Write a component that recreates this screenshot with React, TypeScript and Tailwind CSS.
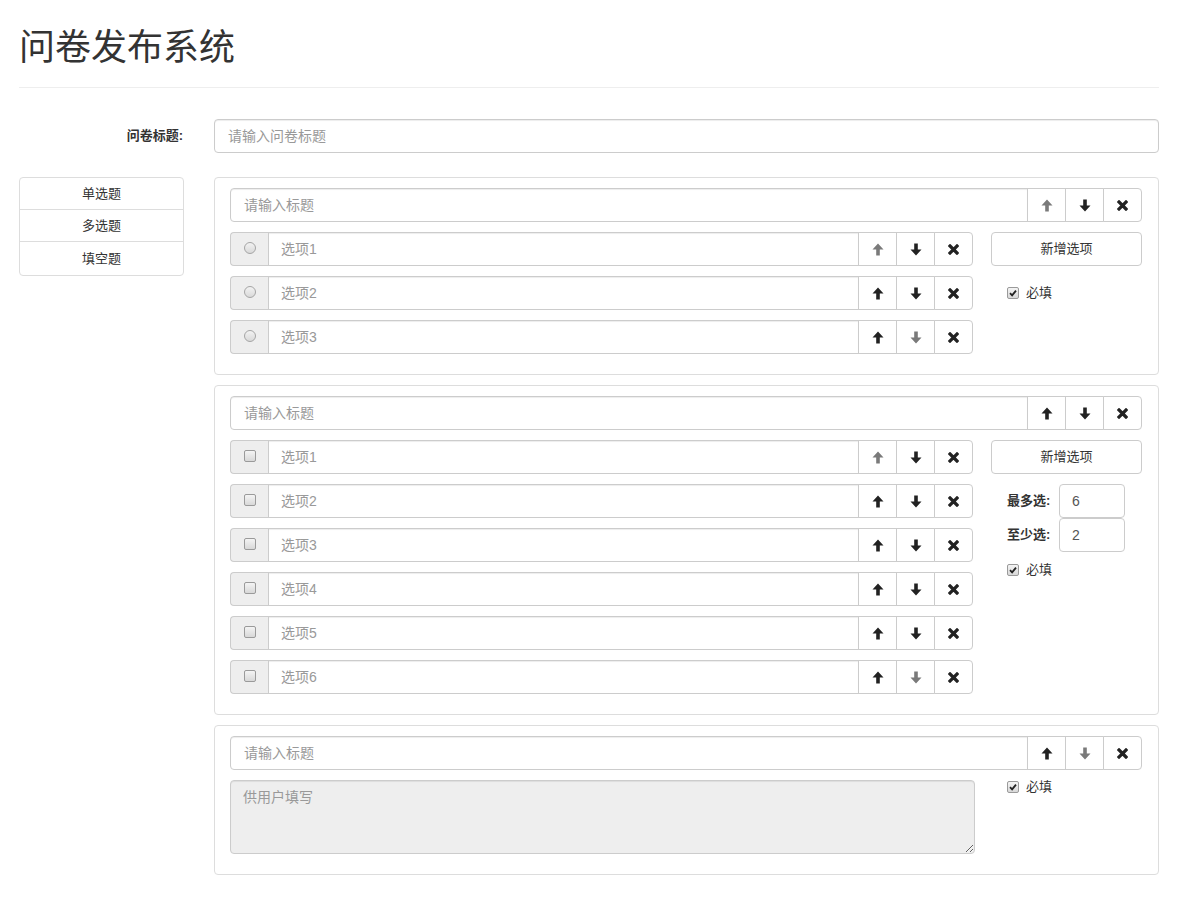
import React from "react";

type Dir = "up" | "down";

function ArrowIcon({ dir, muted }: { dir: Dir; muted?: boolean }) {
  return (
    <svg
      width="12"
      height="13"
      viewBox="0 0 12 13"
      className={muted ? "text-[#7a7a7a]" : "text-[#222]"}
      style={{ transform: dir === "down" ? "rotate(180deg)" : undefined }}
    >
      <polygon fill="currentColor" points="6,0.5 11.5,6.5 7.8,6.5 7.8,12.5 4.2,12.5 4.2,6.5 0.5,6.5" />
    </svg>
  );
}

function RemoveIcon() {
  return (
    <svg width="11" height="11" viewBox="0 0 11 11" className="text-[#222]">
      <path d="M2 2 L9 9 M9 2 L2 9" stroke="currentColor" strokeWidth="3.2" strokeLinecap="square" />
    </svg>
  );
}

function ToolButtons({ upOff, downOff }: { upOff?: boolean; downOff?: boolean }) {
  return (
    <div className="flex">
      <button type="button" className="w-[39px] h-[34px] -ml-px border border-[#ccc] bg-white flex items-center justify-center">
        <ArrowIcon dir="up" muted={upOff} />
      </button>
      <button type="button" className="w-[39px] h-[34px] -ml-px border border-[#ccc] bg-white flex items-center justify-center">
        <ArrowIcon dir="down" muted={downOff} />
      </button>
      <button type="button" className="w-[39px] h-[34px] -ml-px border border-[#ccc] bg-white rounded-r flex items-center justify-center">
        <RemoveIcon />
      </button>
    </div>
  );
}

function FakeCheck({ checked }: { checked?: boolean }) {
  return (
    <span className="w-[12px] h-[12px] rounded-[2px] border border-[#9a9a9a] bg-gradient-to-b from-[#f4f4f4] to-[#d8d8d8] flex items-center justify-center">
      {checked && (
        <svg width="8" height="8" viewBox="0 0 8 8">
          <path d="M1 4.2 L3.1 6.3 L7 1.6" fill="none" stroke="#222" strokeWidth="1.8" />
        </svg>
      )}
    </span>
  );
}

function FakeRadio() {
  return <span className="w-[12px] h-[12px] rounded-full border border-[#a5a5a5] bg-gradient-to-b from-[#f2f2f2] to-[#d9d9d9]" />;
}

function TitleRow({ upOff, downOff }: { upOff?: boolean; downOff?: boolean }) {
  return (
    <div className="flex h-[34px]">
      <input
        className="flex-1 min-w-0 border border-[#ccc] rounded-l px-[13px] text-[14px] text-[#555] placeholder:text-[#999] outline-none shadow-[inset_0_1px_1px_rgba(0,0,0,0.075)]"
        placeholder="请输入标题"
      />
      <ToolButtons upOff={upOff} downOff={downOff} />
    </div>
  );
}

function OptionRow({ label, kind, upOff, downOff }: { label: string; kind: "radio" | "check"; upOff?: boolean; downOff?: boolean }) {
  return (
    <div className="flex h-[34px]">
      <div className="w-[38px] border border-[#ccc] border-r-0 rounded-l bg-[#eee] flex items-center justify-center pb-[2px]">
        {kind === "radio" ? <FakeRadio /> : <FakeCheck />}
      </div>
      <input
        className="flex-1 min-w-0 border border-[#ccc] px-[12px] text-[14px] text-[#555] placeholder:text-[#999] outline-none shadow-[inset_0_1px_1px_rgba(0,0,0,0.075)]"
        placeholder={label}
      />
      <ToolButtons upOff={upOff} downOff={downOff} />
    </div>
  );
}

function Required() {
  return (
    <div className="flex items-center gap-[7px] pl-[16px] h-[20px] text-[13px] text-[#333]">
      <FakeCheck checked />
      <span>必填</span>
    </div>
  );
}

function AddButton() {
  return (
    <button type="button" className="w-full h-[34px] border border-[#ccc] rounded bg-white text-[13px] text-[#333]">
      新增选项
    </button>
  );
}

export default function App() {
  const multi = ["选项1", "选项2", "选项3", "选项4", "选项5", "选项6"];

  return (
    <div className="min-h-screen bg-white text-[#333] font-['Liberation_Sans','Noto_Sans_CJK_SC',sans-serif] px-[19px] w-[1178px]">
      {/* header */}
      <div className="pt-[28px] pb-[19px] border-b border-[#eee]">
        <h1 className="text-[36px] leading-[40px] font-normal text-[#333]">问卷发布系统</h1>
      </div>

      {/* survey title */}
      <div className="flex items-center mt-[31px]">
        <label className="w-[165px] pr-px text-right text-[13px] font-bold">问卷标题:</label>
        <input
          className="ml-[30px] flex-1 h-[34px] border border-[#ccc] rounded px-[13px] text-[14px] placeholder:text-[#999] outline-none shadow-[inset_0_1px_1px_rgba(0,0,0,0.075)]"
          placeholder="请输入问卷标题"
        />
      </div>

      <div className="flex items-start mt-[24px] gap-[30px]">
        {/* type list */}
        <div className="w-[165px] border border-[#ddd] rounded text-[13px] text-[#333]">
          <div className="h-[32px] flex items-center justify-center border-b border-[#ddd]">单选题</div>
          <div className="h-[32px] flex items-center justify-center border-b border-[#ddd]">多选题</div>
          <div className="h-[33px] flex items-center justify-center">填空题</div>
        </div>

        <div className="flex-1 flex flex-col gap-[10px]">
          {/* single choice */}
          <div className="border border-[#ddd] rounded pt-[10px] pb-[20px] pl-[15px] pr-[16px]">
            <TitleRow upOff />
            <div className="flex mt-[10px] gap-[18px]">
              <div className="w-[743px] flex flex-col gap-[10px]">
                <OptionRow label="选项1" kind="radio" upOff />
                <OptionRow label="选项2" kind="radio" />
                <OptionRow label="选项3" kind="radio" downOff />
              </div>
              <div className="flex-1">
                <AddButton />
                <div className="mt-[17px]">
                  <Required />
                </div>
              </div>
            </div>
          </div>

          {/* multiple choice */}
          <div className="border border-[#ddd] rounded pt-[10px] pb-[20px] pl-[15px] pr-[16px]">
            <TitleRow />
            <div className="flex mt-[10px] gap-[18px]">
              <div className="w-[743px] flex flex-col gap-[10px]">
                {multi.map((m, i) => (
                  <OptionRow key={m} label={m} kind="check" upOff={i === 0} downOff={i === multi.length - 1} />
                ))}
              </div>
              <div className="flex-1">
                <AddButton />
                <div className="mt-[10px] pl-[16px] flex items-center">
                  <span className="w-[52px] text-[13px] font-bold">最多选:</span>
                  <input className="w-[66px] h-[34px] border border-[#ccc] rounded px-[12px] text-[14px] text-[#555] outline-none" defaultValue="6" />
                </div>
                <div className="pl-[16px] flex items-center">
                  <span className="w-[52px] text-[13px] font-bold">至少选:</span>
                  <input className="w-[66px] h-[34px] border border-[#ccc] rounded px-[12px] text-[14px] text-[#555] outline-none" defaultValue="2" />
                </div>
                <div className="mt-[8px]">
                  <Required />
                </div>
              </div>
            </div>
          </div>

          {/* fill blank */}
          <div className="border border-[#ddd] rounded pt-[10px] pb-[20px] pl-[15px] pr-[16px]">
            <TitleRow downOff />
            <div className="flex mt-[10px] gap-[16px]">
              <textarea
                readOnly
                className="w-[745px] h-[74px] border border-[#ccc] rounded bg-[#eee] px-[12px] py-[6px] text-[14px] placeholder:text-[#999] outline-none resize-y shadow-[inset_0_1px_1px_rgba(0,0,0,0.075)]"
                placeholder="供用户填写"
              />
              <div className="flex-1 -mt-[3px]">
                <Required />
              </div>
            </div>
          </div>
        </div>
      </div>
      <div className="h-[30px]" />
    </div>
  );
}
